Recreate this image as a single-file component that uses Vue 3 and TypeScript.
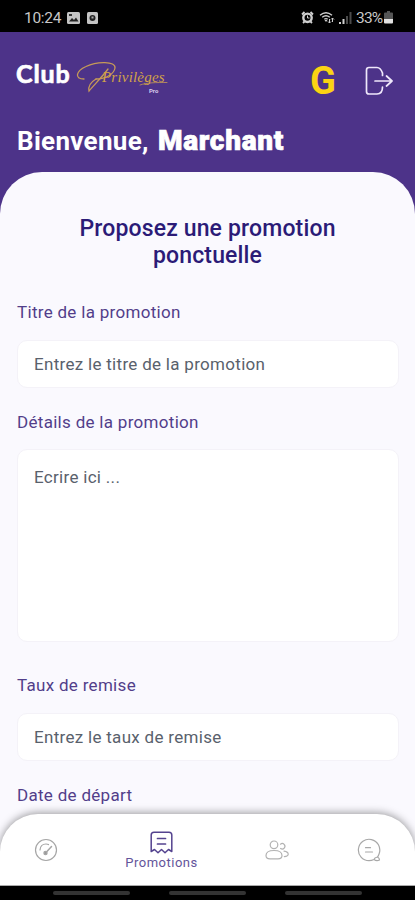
<script setup lang="ts">
import { ref } from 'vue'

interface Field {
  id: string
  label: string
  placeholder: string
  multiline?: boolean
}

const fields: Field[] = [
  { id: 'titre', label: 'Titre de la promotion', placeholder: 'Entrez le titre de la promotion' },
  { id: 'details', label: 'Détails de la promotion', placeholder: 'Ecrire ici ...', multiline: true },
  { id: 'taux', label: 'Taux de remise', placeholder: 'Entrez le taux de remise' },
]

const values = ref<Record<string, string>>({ titre: '', details: '', taux: '' })
</script>

<template>
  <div class="screen">
    <div class="status">
      <span class="time">10:24</span>
      <svg class="s-img" width="13" height="12" viewBox="0 0 13 12">
        <rect width="13" height="12" rx="1.5" fill="#c4c4c4" />
        <path d="M2 9.5 5 6l2 2 2-2.500 2.500 4z" fill="#222" />
        <rect x="2" y="2" width="3" height="2" fill="#333" />
      </svg>
      <svg class="s-app" width="11" height="12" viewBox="0 0 11 12">
        <rect width="11" height="12" rx="1.500" fill="#c4c4c4" />
        <circle cx="5.500" cy="6" r="3" fill="#222" />
        <path d="M4.500 4.500h2v2h-2z" fill="#aaa" />
      </svg>
      <span class="grow"></span>
      <svg class="s-alarm" width="13" height="13" viewBox="0 0 13 13" fill="none" stroke="#cfcfcf">
        <circle cx="6.500" cy="6.800" r="4.200" stroke-width="2.400" />
        <path d="M1 3.500 3.500 1M12 3.500 9.500 1M2 12l1.500-1.500M11 12l-1.500-1.500" stroke-width="1.800" />
        <path d="M6.500 4.500v2.500h2" stroke-width="1" />
      </svg>
      <svg class="s-wifi" width="16" height="13" viewBox="0 0 16 13" fill="none" stroke="#cfcfcf" stroke-width="1.400">
        <path d="M1 4.200Q7 -.8 13 4.200M3.200 6.300Q7 3 10.800 6.300M5.300 8.300Q7 7 8.700 8.300" />
        <path d="M7 11 5.500 9h3z" fill="#cfcfcf" stroke="none" />
        <path d="M10.500 8v4M13.500 7v4M9 10.500l1.500 1.500L12 10.500M12 8.500 13.500 7 15 8.500" stroke-width="1" />
      </svg>
      <svg class="s-signal" width="13" height="12" viewBox="0 0 13 12">
        <path d="M0 10h2v2H0zM3.500 7h2v5h-2z" fill="#cfcfcf" />
        <path d="M7 4h2v8H7zM10.500 0h2v12h-2z" fill="#4a4a4a" />
      </svg>
      <span class="percent">33%</span>
      <svg class="s-bat" width="9" height="13" viewBox="0 0 9 13">
        <path d="M3 0h3v1.500h2q1 0 1 1V8H0V2.500q0-1 1-1h2z" fill="#555" />
        <path d="M0 8h9v3.500q0 1-1 1H1q-1 0-1-1z" fill="#e2e2e2" />
      </svg>
    </div>

    <header class="header">
      <div class="brand-row">
        <div class="club">Club</div>
        <div class="privileges">
          <svg class="swash" width="94" height="36" viewBox="0 0 94 36" fill="none" stroke="#c69a58" stroke-width="1.300" stroke-linecap="round">
            <path d="M8 18C-2 18 0 10 10 5.500C21 0 40 0 39 7C38 13 30 18 20 18" />
            <path d="M32 8C26 16 18 24 13 30C12 25 15 21 20 18" />
            <path d="M64 24C71 21.500 80 21.500 91 21.500" stroke-width=".8" />
          </svg>
          <span class="script">Privilèges</span>
          <span class="pro">Pro</span>
        </div>
        <span class="grow"></span>
        <span class="gold">G</span>
        <svg class="logout" width="28" height="30" viewBox="0 0 28 30" fill="none" stroke="#efe8fb" stroke-width="1.700" stroke-linecap="round" stroke-linejoin="round">
          <path d="M17.500 9.500V7Q15.500 1.500 12 1.500H4Q1.500 1.500 1.500 4V25.500Q1.500 28 4 28H12Q17.500 28 17.500 21" />
          <path d="M10 15H27M21.500 10 27 15 21.500 20" />
        </svg>
      </div>
      <h1 class="welcome"><span class="hello">Bienvenue,</span><strong>Marchant</strong></h1>
    </header>

    <main class="sheet">
      <h2 class="title"><span>Proposez une promotion</span><span class="second">ponctuelle</span></h2>
      <div v-for="f in fields" :key="f.id" class="field" :class="f.id">
        <label :for="f.id">{{ f.label }}</label>
        <textarea v-if="f.multiline" :id="f.id" v-model="values[f.id]" :placeholder="f.placeholder"></textarea>
        <input v-else :id="f.id" v-model="values[f.id]" type="text" :placeholder="f.placeholder" />
      </div>
      <div class="field depart"><label>Date de départ</label></div>
    </main>

    <div class="bottom">
      <nav class="tabs">
        <a class="tab">
          <svg width="24" height="24" viewBox="0 0 24 24" fill="none" stroke="#a6a6a6" stroke-width="1.200" stroke-linecap="round">
            <circle cx="12" cy="12" r="10.500" />
            <path d="M6 12Q6.500 6 12 6Q13.500 6 14.500 6.600" />
            <path d="M12 14.500 17.500 8.500" stroke-width="1.500" />
            <circle cx="11.500" cy="15" r="1.600" fill="#999" />
          </svg>
        </a>
        <a class="tab active">
          <svg width="23" height="23" viewBox="0 0 23 23" fill="none" stroke="#54438f" stroke-width="1.500" stroke-linecap="round" stroke-linejoin="round">
            <path d="M1.200 20.500V4Q1.200 1.200 4 1.200H19Q21.800 1.200 21.800 4V20.500L18.500 18.500 15 21.800 11.500 18.500 8 21.800 4.500 18.500Z" />
            <path d="M7.500 7.500H15.500M7.500 13H15.500" stroke-width="1.700" />
          </svg>
          <span>Promotions</span>
        </a>
        <a class="tab">
          <svg width="24" height="20" viewBox="0 0 24 20" fill="none" stroke="#b2b2b2" stroke-width="1.200" stroke-linecap="round">
            <circle cx="9" cy="4.800" r="3.800" />
            <path d="M1 15.500Q1 10.500 9 10.500Q17 10.500 17 15.500Q17 18.800 13 18.800H5Q1 18.800 1 15.500Z" />
            <path d="M15.500 4.200A2.700 2.700 0 1 1 15.600 8.500M19 11.200Q23.200 11.800 23.200 14.300Q23 16.500 19.300 16.600" />
          </svg>
        </a>
        <a class="tab">
          <svg width="24" height="24" viewBox="0 0 24 24" fill="none" stroke="#a8a8a8" stroke-width="1.200" stroke-linecap="round" stroke-linejoin="round">
            <path d="M17 21.500Q14.500 22.700 12 22.700A10.700 10.700 0 1 1 22.200 15.500Q21.500 17.800 20.500 19Q22.500 20 22.500 22Q19.500 23.500 17 21.500Q17.500 19.500 20.500 19" />
            <path d="M8.500 9.700H13.500M8.500 14H15.500" />
          </svg>
        </a>
      </nav>
      <div class="keys"><i></i><i></i><i></i></div>
    </div>
  </div>
</template>

<style>
body {
  margin: 0;
  overflow: hidden;
}
</style>

<style scoped>
.screen {
  width: 415px;
  height: 900px;
  display: flex;
  flex-direction: column;
  overflow: hidden;
  background: #4d3389;
  font-family: Roboto, 'Liberation Sans', sans-serif;
}
.grow {
  flex: 1;
}
.status {
  height: 32px;
  flex: none;
  box-sizing: border-box;
  padding: 3px 22px 0 24px;
  display: flex;
  align-items: center;
  background: #000;
  color: #c8c8c8;
  font-size: 15.500px;
}
.time {
  width: 43px;
  letter-spacing: -0.300px;
}
.s-app {
  margin-left: 7px;
}
.s-wifi {
  margin-left: 5px;
}
.s-signal {
  margin-left: 4px;
}
.percent {
  margin-left: 4px;
  width: 28px;
  letter-spacing: -0.800px;
}
.header {
  height: 140px;
  flex: none;
}
.brand-row {
  display: flex;
  height: 84px;
  padding: 0 22px 0 16px;
  align-items: flex-start;
}
.club {
  width: 60px;
  padding-top: 25px;
  color: #fff;
  font: 700 25px/32px Lato, sans-serif;
  letter-spacing: 0.900px;
  -webkit-text-stroke: 0.700px #fff;
}
.privileges {
  position: relative;
  width: 94px;
  height: 36px;
  margin-top: 29px;
}
.swash {
  position: absolute;
  inset: 0;
}
.script {
  position: absolute;
  left: 26px;
  top: 8px;
  color: #d2a248;
  font: italic 400 15px/17px 'Liberation Serif', serif;
  letter-spacing: 0.200px;
}
.pro {
  position: absolute;
  left: 73px;
  top: 26px;
  color: #d9cdec;
  font-size: 6px;
  line-height: 7px;
  font-weight: 700;
}
.gold {
  width: 26px;
  margin-top: 29px;
  margin-right: 29px;
  color: #fbd313;
  font-size: 38px;
  line-height: 40px;
  font-weight: 700;
}
.logout {
  margin-top: 34px;
}
.welcome {
  margin: 9px 0 0 17px;
  display: flex;
  color: #fff;
  font-size: 26px;
  line-height: 32px;
  font-weight: 700;
}
.hello {
  width: 141px;
  letter-spacing: 0.300px;
}
.welcome strong {
  font-size: 28px;
  font-weight: 900;
  letter-spacing: 0.700px;
  -webkit-text-stroke: 0.700px #fff;
}
.sheet {
  flex: 1;
  padding: 43px 17px 0;
  background: #faf9fe;
  border-radius: 42px 42px 0 0;
}
.title {
  margin: 0;
  display: flex;
  flex-direction: column;
  align-items: center;
  color: #2b1b77;
  font-size: 23px;
  line-height: 27px;
  font-weight: 500;
  letter-spacing: 0.150px;
}
.field {
  display: flex;
  flex-direction: column;
}
.field label {
  height: 20px;
  color: #523e8a;
  font-size: 17px;
  line-height: 20px;
  letter-spacing: 0.300px;
}
.titre {
  margin-top: 33px;
}
.details,
.depart {
  margin-top: 24px;
}
.taux {
  margin-top: 33px;
}
input,
textarea {
  box-sizing: border-box;
  width: 382px;
  margin: 18px 0 0;
  padding: 0 16px;
  border: 1px solid #f4f2f8;
  border-radius: 10px;
  outline: none;
  background: #fff;
  color: #59616c;
  font: 400 17px/20px Roboto, 'Liberation Sans', sans-serif;
  letter-spacing: 0.300px;
  resize: none;
}
input {
  height: 48px;
}
textarea {
  height: 193px;
  margin-top: 17px;
  padding-top: 17px;
  overflow: hidden;
}
::placeholder {
  color: #59616c;
  opacity: 1;
}
.bottom {
  position: absolute;
  top: 814px;
  left: 0;
  width: 415px;
  height: 86px;
}
.tabs {
  height: 72px;
  box-sizing: border-box;
  display: grid;
  grid-template-columns: 92px 139px 92px 92px;
  background: #fff;
  border-bottom: 1px solid #aaa;
  border-radius: 38px 38px 0 0;
  box-shadow: 0 -1px 9px rgba(0, 0, 0, 0.400);
}
.tab {
  display: flex;
  flex-direction: column;
  align-items: center;
  justify-content: center;
}
.active {
  justify-content: flex-start;
  padding-top: 17px;
  color: #63549a;
  font-size: 13px;
  line-height: 17px;
  letter-spacing: 0.500px;
}
.keys {
  height: 14px;
  display: flex;
  gap: 39px;
  padding: 5px 0 0 53px;
  box-sizing: border-box;
  background: #000;
}
.keys i {
  width: 77px;
  height: 4px;
  border-radius: 2px;
  background: #333;
}
</style>
